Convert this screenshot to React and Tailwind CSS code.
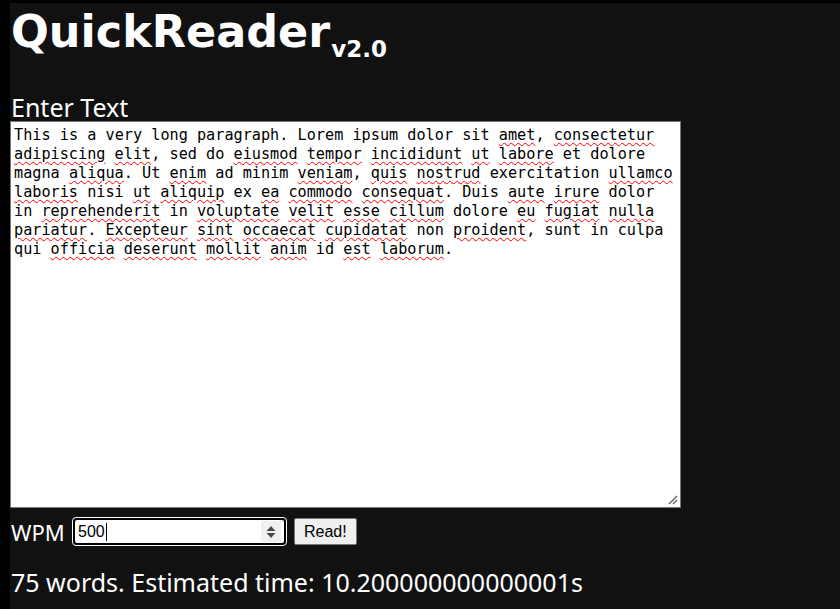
import React from "react";

const LINES = [
  "This is a very long paragraph. Lorem ipsum dolor sit ~amet, ~consectetur",
  "~adipiscing ~elit, sed do ~eiusmod ~tempor ~incididunt ~ut ~labore et dolore",
  "magna ~aliqua. Ut ~enim ad minim ~veniam, ~quis ~nostrud exercitation ~ullamco",
  "~laboris nisi ~ut ~aliquip ex ~ea ~commodo ~consequat. Duis ~aute ~irure dolor",
  "in ~reprehenderit in ~voluptate ~velit ~esse ~cillum dolore ~eu ~fugiat ~nulla",
  "~pariatur. ~Excepteur ~sint ~occaecat ~cupidatat non ~proident, sunt in culpa",
  "qui ~officia ~deserunt ~mollit ~anim id ~est ~laborum.",
];

// words prefixed with ~ get the spellcheck squiggle
function Line({ text }) {
  const parts = text.split(" ");
  return (
    <div className="whitespace-pre h-[19px]">
      {parts.map((p, i) => {
        const flagged = p.startsWith("~");
        let word = flagged ? p.slice(1) : p;
        let tail = "";
        const m = word.match(/^(.*?)([.,]?)$/);
        if (m) {
          word = m[1];
          tail = m[2];
        }
        return (
          <React.Fragment key={i}>
            {i > 0 && " "}
            {flagged ? (
              <span className="underline decoration-wavy decoration-[#f00] decoration-[1px] underline-offset-[2px]">
                {word}
              </span>
            ) : (
              word
            )}
            {tail}
          </React.Fragment>
        );
      })}
    </div>
  );
}

export default function App() {
  return (
    <div className="bg-black w-[840px] h-[609px] pt-[3px] pl-[10px] overflow-hidden">
      <div className="bg-[#111] h-full text-white font-['Segoe_UI','Noto_Sans',sans-serif]">
        {/* Header */}
        <h1 className="font-['Verdana','DejaVu_Sans',sans-serif] font-bold text-[44.5px] leading-[52px] pl-[1px] pt-[3px]">
          QuickReader
          <sub className="text-[23px] font-bold align-[-4px] ml-[1px]">v2.0</sub>
        </h1>

        <p className="mt-[36px] text-[25px] leading-[26px] pl-[1px]">Enter Text</p>

        {/* Text box */}
        <div className="relative mt-[1px] w-[671px] h-[387px] bg-white border border-[#767676] text-black font-['DejaVu_Sans_Mono',monospace] text-[15.2px] leading-[19px] pl-[3px] pt-[4px]">
          {LINES.map((l, i) => (
            <Line key={i} text={l} />
          ))}
          <svg className="absolute right-[2px] bottom-[2px]" width="10" height="10" viewBox="0 0 10 10">
            <path d="M1 9 L9 1 M5 9 L9 5" stroke="#666" strokeWidth="1.5" />
          </svg>
        </div>

        {/* Controls */}
        <div className="flex items-center mt-[9px] h-[29px]">
          <span className="text-[22px] leading-[24px] pl-[1px] w-[62px]">WPM</span>
          <div className="relative w-[215px] h-[29px] rounded-[4px] border border-white bg-black p-[2px]">
            <div className="flex items-center h-full bg-white rounded-[2px] font-['Liberation_Sans',Arial,sans-serif] text-[16px] text-black pl-[3px]">
              <span>500</span>
              <span className="w-[1px] h-[18px] bg-black ml-[1px]" />
              <div className="ml-auto mr-[3px] w-[20px] h-[21px] bg-[#f0f0f0] flex items-center justify-center">
                <svg width="12" height="16" viewBox="0 0 12 16">
                  <path d="M1.5 7 L6 2 L10.5 7 Z M1.5 9 L6 14 L10.5 9 Z" fill="#4a4a4a" />
                </svg>
              </div>
            </div>
          </div>
          <button className="ml-[7px] h-[27px] px-[9px] bg-[#efefef] border border-[#767676] rounded-[2px] text-black font-['Liberation_Sans',Arial,sans-serif] text-[16px]">
            Read!
          </button>
        </div>

        <p className="mt-[22px] text-[25px] leading-[28px] pl-[1px]">
          75 words. Estimated time: 10.200000000000001s
        </p>
      </div>
    </div>
  );
}
